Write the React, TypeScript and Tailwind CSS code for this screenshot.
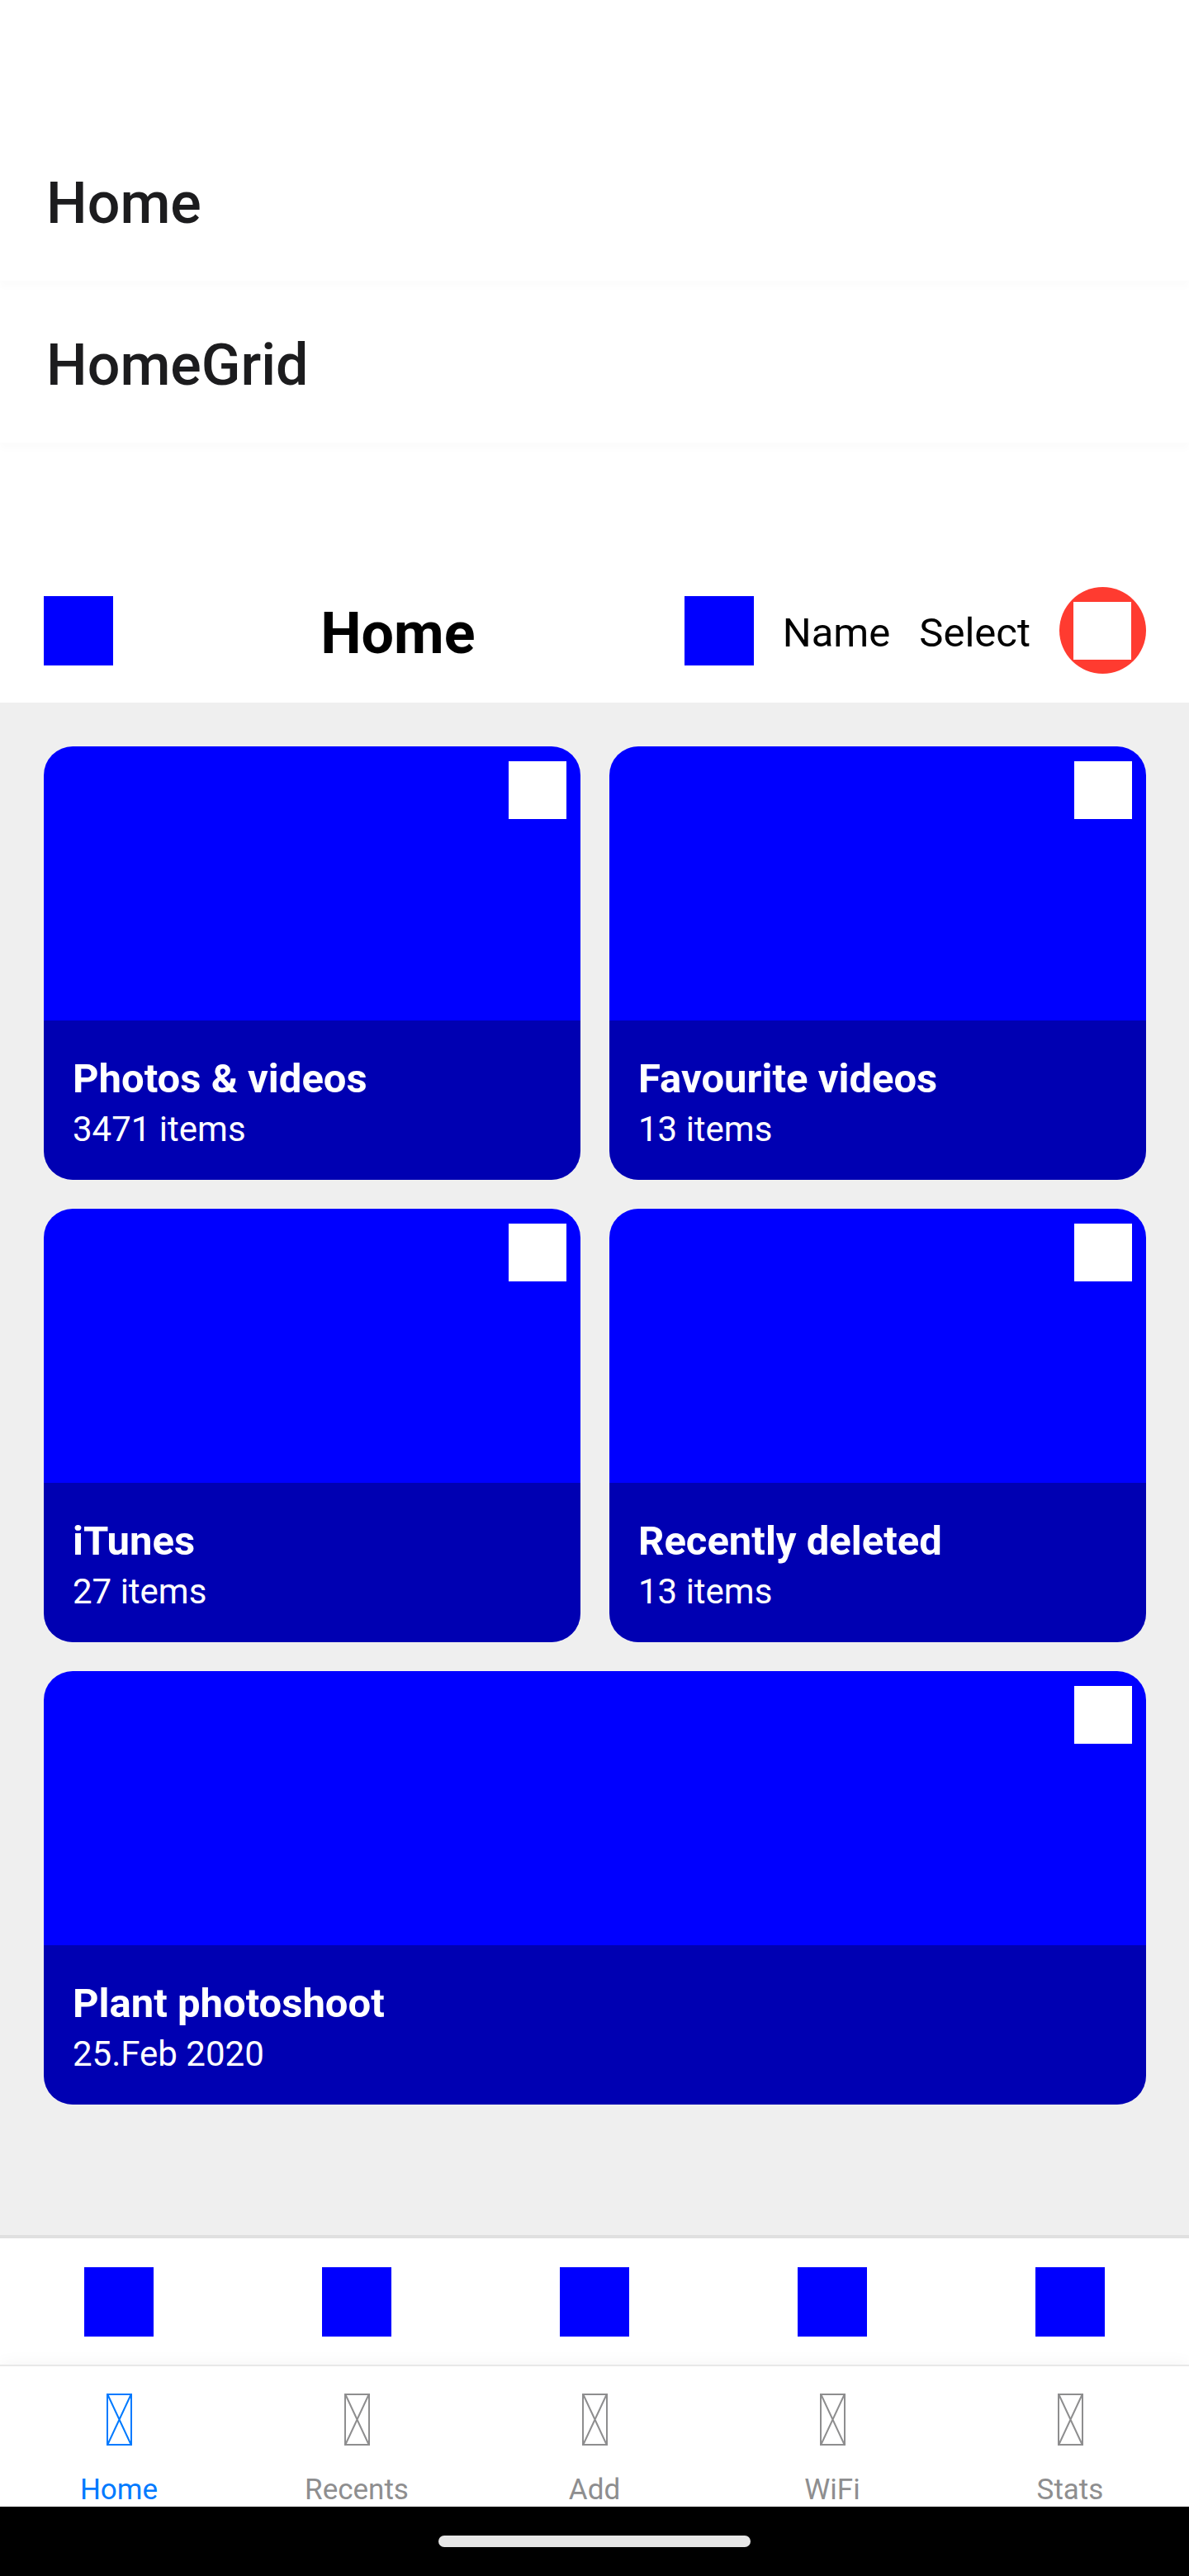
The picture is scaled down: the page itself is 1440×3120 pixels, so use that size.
const albums = [
  { title: "Photos & videos", detail: "3471 items" },
  { title: "Favourite videos", detail: "13 items" },
  { title: "iTunes", detail: "27 items" },
  { title: "Recently deleted", detail: "13 items" },
  { title: "Plant photoshoot", detail: "25.Feb 2020", wide: true },
];

const tabs = ["Home", "Recents", "Add", "WiFi", "Stats"];

function NavHeader({ title, raised }: { title: string; raised?: boolean }) {
  return (
    <header
      className={`relative flex h-[196px] shrink-0 items-center bg-white pt-[7px] pl-14 text-[70px] leading-[82px] font-medium text-[#1c1c1e] shadow-[0_8px_8px_rgba(0,0,0,0.015)] ${raised ? "z-10" : ""}`}
    >
      {title}
    </header>
  );
}

function AlbumCard({ title, detail, wide }: { title: string; detail: string; wide?: boolean }) {
  return (
    <article
      className={`relative flex h-[525px] flex-col justify-end overflow-hidden rounded-[35px] bg-[#0000ff] text-white ${wide ? "col-span-2" : ""}`}
    >
      <span className="absolute top-[18px] right-[17px] size-[70px] bg-white" />
      <div className="h-[193px] bg-black/30 pt-[42px] pl-[35px]">
        <h2 className="text-[49px] leading-[57px] font-bold">{title}</h2>
        <p className="mt-[8px] text-[42px] leading-[49px]">{detail}</p>
      </div>
    </article>
  );
}

function MissingGlyph() {
  return (
    <svg className="h-[63px] w-[31px]" viewBox="0 0 31 63" fill="none" stroke="currentColor">
      <rect x="1" y="1" width="29" height="61" strokeWidth="2" />
      <path d="M1.5 1.5 29.5 61.5M29.5 1.5 1.5 61.5" strokeWidth="2" />
    </svg>
  );
}

export default function App() {
  return (
    <div className="flex h-[3120px] w-[1440px] flex-col overflow-hidden bg-white pt-36 font-[Roboto,sans-serif] text-black">
      <NavHeader title="Home" raised />
      <NavHeader title="HomeGrid" />

      <div className="flex h-[315px] shrink-0 items-end justify-between pr-[52px] pb-[35px] pl-[53px]">
        <span className="mb-[10px] size-[84px] bg-[#0000ff]" />
        <h1 className="mb-[8px] pr-[2px] text-[70px] leading-[82px] font-bold">Home</h1>
        <div className="flex items-center gap-[35px] text-[49px] leading-[57px]">
          <span className="size-[84px] bg-[#0000ff]" />
          <span className="pt-[6px]">Name</span>
          <span className="pt-[6px]">Select</span>
          <span className="flex size-[105px] items-center justify-center rounded-full bg-[#ff3b30]">
            <span className="size-[70px] bg-white" />
          </span>
        </div>
      </div>

      <main className="grid h-[1856px] shrink-0 grid-cols-2 content-start gap-[35px] bg-[#efefef] pt-[53px] pr-[52px] pl-[53px]">
        {albums.map((album) => (
          <AlbumCard key={album.title} {...album} />
        ))}
      </main>

      <div className="grid h-[157px] shrink-0 grid-cols-5 justify-items-center border-t-4 border-[#e0e0e0] pt-[35px]">
        {tabs.map((tab) => (
          <span key={tab} className="size-[84px] bg-[#0000ff]" />
        ))}
      </div>

      <nav className="grid h-[172px] shrink-0 grid-cols-5 border-t-2 border-[#e8e8e8] bg-white shadow-[0_0_20px_rgba(0,0,0,0.05)]">
        {tabs.map((tab, index) => (
          <div
            key={tab}
            className={`flex flex-col items-center pt-[33px] ${index === 0 ? "text-[#007aff]" : "text-[#8e8e8f]"}`}
          >
            <MissingGlyph />
            <span className="mt-[33px] text-[35px] leading-[41px]">{tab}</span>
          </div>
        ))}
      </nav>

      <footer className="z-10 flex h-[84px] shrink-0 items-center justify-center bg-black">
        <span className="h-[14px] w-[378px] rounded-full bg-[#e6e6e6]" />
      </footer>
    </div>
  );
}
